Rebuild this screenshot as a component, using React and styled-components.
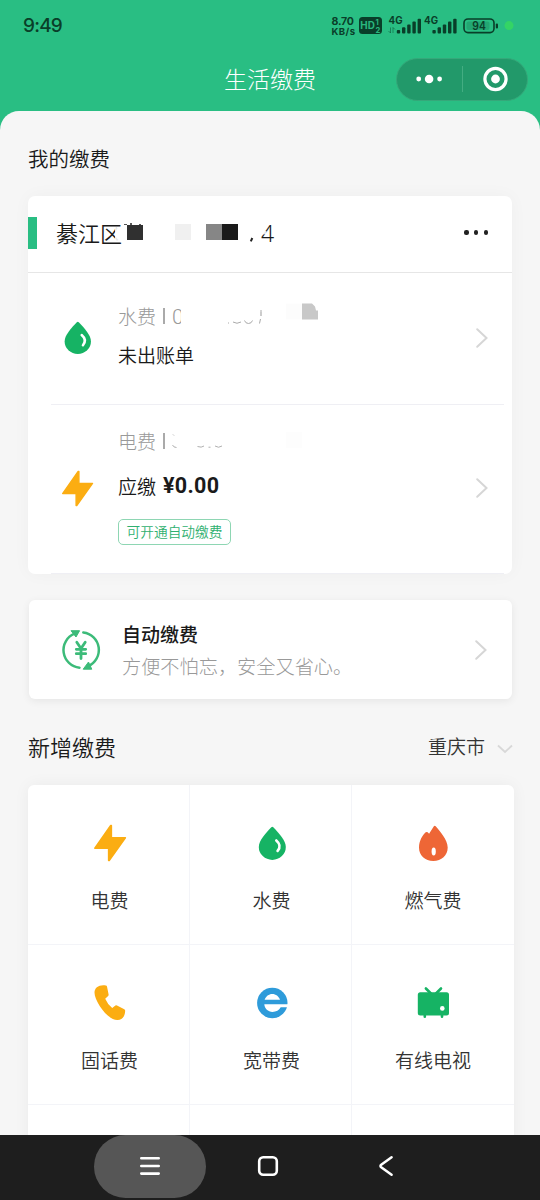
import React from "react";
import styled, { createGlobalStyle } from "styled-components";

const services = [
  { name: "电费", icon: BoltIcon },
  { name: "水费", icon: DropIcon },
  { name: "燃气费", icon: FlameIcon },
  { name: "固话费", icon: PhoneIcon },
  { name: "宽带费", icon: BroadbandIcon },
  { name: "有线电视", icon: TvIcon },
  { name: "" },
  { name: "" },
  { name: "" },
];

export default function App() {
  return (
    <Screen>
      <GlobalStyle />
      <StatusBar>
        <Clock>9:49</Clock>
        <StatusIcons />
      </StatusBar>

      <NavBar>
        <PageTitle>生活缴费</PageTitle>
        <Capsule>
          <CapsuleButton aria-label="更多">
            <svg width="28" height="12" viewBox="0 0 28 12" fill="#fff">
              <circle cx="3.7" cy="6" r="2.4" />
              <circle cx="14.1" cy="6" r="4.3" />
              <circle cx="24.6" cy="6" r="2.4" />
            </svg>
          </CapsuleButton>
          <CapsuleLine />
          <CapsuleButton aria-label="关闭">
            <svg width="26" height="26" viewBox="0 0 26 26">
              <circle cx="13.500" cy="13" r="10.6" fill="none" stroke="#fff" strokeWidth="3.2" />
              <circle cx="13.500" cy="13" r="4.4" fill="#fff" />
            </svg>
          </CapsuleButton>
        </Capsule>
      </NavBar>

      <Sheet>
        <SectionTitle>我的缴费</SectionTitle>

        <BillCard>
          <BillHeader>
            <Accent />
            <Address>綦江区</Address>
            <AddressMask />
            <MoreDots>
              <i />
              <i />
              <i />
            </MoreDots>
          </BillHeader>

          <BillRow $height={131} $top={30}>
            <IconSlot>
              <DropIcon size={39} />
            </IconSlot>
            <BillInfo>
              <Account>
                水费<Bar />
                <WaterMask />
              </Account>
              <BillState $gap={13}>未出账单</BillState>
            </BillInfo>
            <Chevron />
          </BillRow>
          <Divider />
          <BillRow $height={168} $top={23}>
            <IconSlot>
              <BoltIcon size={39} />
            </IconSlot>
            <BillInfo>
              <Account>
                电费<Bar />
                <PowerMask />
              </Account>
              <BillState $gap={18}>
                应缴 <Amount>¥0.00</Amount>
              </BillState>
              <Tag>可开通自动缴费</Tag>
            </BillInfo>
            <Chevron />
          </BillRow>
          <Divider />
        </BillCard>

        <AutoCard>
          <AutoPayIcon />
          <AutoText>
            <AutoTitle>自动缴费</AutoTitle>
            <AutoDesc>方便不怕忘，安全又省心。</AutoDesc>
          </AutoText>
          <Chevron />
        </AutoCard>

        <NewHeader>
          <NewTitle>新增缴费</NewTitle>
          <City>
            重庆市
            <svg width="16" height="10" viewBox="0 0 16 10" fill="none">
              <path d="M1 1.5 8 8l7-6.5" stroke="#d8d8d8" strokeWidth="1.8" />
            </svg>
          </City>
        </NewHeader>

        <Grid>
          {services.map(({ name, icon: Icon }, index) => (
            <Cell key={index}>
              {Icon && <Icon size={40} />}
              <CellName>{name}</CellName>
            </Cell>
          ))}
        </Grid>
      </Sheet>

      <SystemNav>
        <NavPill>
          <svg width="22" height="20" viewBox="0 0 22 20" stroke="#fff" strokeWidth="2.6" strokeLinecap="round">
            <path d="M2.3 2.3h17.4M2.3 10h17.4M2.3 17.6h17.4" />
          </svg>
        </NavPill>
        <NavButton $width={124}>
          <svg width="22" height="22" viewBox="0 0 22 22" fill="none">
            <rect x="2.2" y="2.2" width="17.6" height="17.6" rx="4" stroke="#fff" strokeWidth="2.6" />
          </svg>
        </NavButton>
        <NavButton $width={112}>
          <svg width="16" height="22" viewBox="0 0 16 22" fill="none">
            <path
              d="M13.6 2.2 3.2 9.8q-1.5 1.2 0 2.4l10.4 7.6"
              stroke="#fff"
              strokeWidth="2.5"
              strokeLinecap="round"
              strokeLinejoin="round"
            />
          </svg>
        </NavButton>
      </SystemNav>
    </Screen>
  );
}

function StatusIcons() {
  const ink = "#093e29";
  const bars = [0, 1, 2, 3, 4];
  return (
    <svg width="186" height="24" viewBox="0 0 186 24" fontFamily="Inter, sans-serif" fontWeight="700" fill={ink}>
      <text x="0.5" y="12.2" fontSize="10.6" textLength="22.5">8.70</text>
      <text x="0.5" y="21.6" fontSize="9.6" textLength="23.5">KB/s</text>
      <rect x="28" y="4" width="23" height="17" rx="3.5" />
      <g fill="#2ab77e">
        <text x="29.3" y="16.3" fontSize="9.800" textLength="14.500" lengthAdjust="spacingAndGlyphs">HD</text>
        <text x="44.5" y="12" fontSize="7.6">1</text>
        <text x="44.5" y="19.6" fontSize="7.6">2</text>
      </g>
      {[57.5, 93.1].map((x) => (
        <g key={x}>
          <text x={x} y="11.2" fontSize="10" textLength="14" lengthAdjust="spacingAndGlyphs">4G</text>
          {bars.map((b) => (
            <rect key={b} x={x + 8.3 + b * 5.2} y={17 - b * 2.8} width="3.4" height={3.6 + b * 2.8} rx="1" />
          ))}
        </g>
      ))}
      <path d="M59.5 14.5v5.5l-2-2M62 20v-5.5l2 2" fill="none" stroke={ink} strokeOpacity="0.45" strokeWidth="1" />
      <rect x="133" y="6" width="30" height="13.600" rx="4" fill="none" stroke={ink} strokeWidth="1.6" />
      <rect x="135.5" y="8.5" width="23" height="8.600" rx="2" fillOpacity="0.18" />
      <rect x="164.8" y="10.5" width="2.2" height="5" rx="1" />
      <text x="141.3" y="17" fontSize="11.3" fontWeight="600" textLength="13.500" lengthAdjust="spacingAndGlyphs">94</text>
      <circle cx="178" cy="12.6" r="4.5" fill="#34d465" />
    </svg>
  );
}

// hidden part of the address
function AddressMask() {
  return (
    <Mask width="180" height="30" viewBox="0 0 180 30">
      <path d="M2 8.500h8v14H2z" fill="#fff" fillOpacity="0.9" />
      <path d="M11 5.500h3M26 5.500h2" stroke="#555" strokeWidth="1.2" />
      <path d="M18 4v2" stroke="#222" strokeWidth="1.5" />
      <rect x="14" y="6" width="16" height="15" fill="#303030" />
      <rect x="62" y="5" width="16" height="16" fill="#f0f0f0" />
      <rect x="93" y="5" width="16" height="16" fill="#868686" />
      <rect x="109" y="5" width="16" height="16" fill="#1a1a1a" />
      <path d="m139.3 19-1.5 3.3" stroke="#222" strokeWidth="2" />
      <text x="148" y="22.6" fontFamily="Noto Sans" fontSize="23" fill="#1a1a1a">4</text>
      <path d="M147 5h8l-4.5 7 3 0v3l-7 1z" fill="#fff" fillOpacity="0.85" />
    </Mask>
  );
}

function WaterMask() {
  return (
    <Mask width="150" height="26" viewBox="0 0 150 26">
      <text x="0" y="20.5" fontFamily="Roboto" fontWeight="300" fontSize="21" fill="#9a9a9a">0</text>
      <path d="M9 4h5v18H9z" fill="#fff" />
      <path d="M56 20h1M61 19q4 2.5 8 0M72.500 17.500q1 3 4 3t4-3M89 7v2M88.500 16l-1 4.500" fill="none" stroke="#aaa" />
      <path d="M89 9v4" stroke="#999" />
      <path d="M114 0.500h16v16h-16z" fill="#fcfcfc" />
      <path d="M130 0.500h10l3 3 1 4h2v9h-16z" fill="#c8c8c8" />
    </Mask>
  );
}

function PowerMask() {
  return (
    <Mask width="150" height="26" viewBox="0 0 150 26">
      <path
        d="M1 6.500l1 1M0.500 17q1 2.500 4 2.500M25.500 18.500q4 1.500 6.500-.5M36.500 19.200h2M43 18q3.500 2.500 7 0"
        fill="none"
        stroke="#b0b0b0"
      />
      <rect x="114" y="4" width="16" height="16" fill="#fdfdfd" />
    </Mask>
  );
}

function BoltIcon({ size }) {
  return (
    <svg width={size} height={size} viewBox="0 0 40 40">
      <path
        d="M20.7 2.500h.7v12.300h14L19.200 37.500h-.6V25.200H4.800z"
        fill="#fbad12"
        stroke="#fbad12"
        strokeWidth="1.500"
        strokeLinejoin="round"
      />
    </svg>
  );
}

function DropIcon({ size }) {
  return (
    <svg width={size} height={size} viewBox="0 0 40 40">
      <path
        d="M19.300 4.300q1-1 2 0C27 10.300 33.800 17.500 33.800 24a13.500 12.900 0 0 1-27 0C6.800 17.500 13.600 10.300 19.300 4.300z"
        fill="#16b364"
      />
      <path d="M24.300 17.500q5.800 5 1.300 10.400" fill="none" stroke="#fff" strokeWidth="2.600" strokeLinecap="round" />
    </svg>
  );
}

function FlameIcon({ size }) {
  return (
    <svg width={size} height={size} viewBox="0 0 40 40">
      <path
        d="M20.700 3.400q1.100-1.300 2.200 0C26.500 7.800 34.700 16.500 34.700 24.500 34.700 32.500 28.500 38 20.300 38S6 32.500 6 24.500C6 18 9.300 12.500 12.700 9.300q1-.8 2 0l1.400 1.500z"
        fill="#ee6636"
      />
      <ellipse cx="20.700" cy="28.500" rx="2.100" ry="3.900" fill="#fff" />
    </svg>
  );
}

function PhoneIcon({ size }) {
  return (
    <svg width={size} height={size} viewBox="0 0 40 40">
      <path
        d="M4.500 9.700C4.500 4.500 9 1.400 15.800 2.400q1 .1 1.200 1.200l1.600 7.800q.1.900-.5 1.500l-2.900 2.800q2.500 5.800 7 9.300l3.200-2.400q.8-.5 1.600-.1l7.300 3.700q.9.500.9 1.500C35 34 31.500 37.300 27.200 37 17.500 37 4.500 18 4.500 9.700z"
        fill="#fbad12"
      />
    </svg>
  );
}

function BroadbandIcon({ size }) {
  return (
    <svg width={size} height={size} viewBox="0 0 40 40">
      <circle cx="20.300" cy="20" r="15.200" fill="#2e9bda" />
      <path d="M12.600 16.800c1.200-3.400 4.200-5.700 7.700-5.700s6.500 2.300 7.700 5.700z" fill="#fff" />
      <path d="M12.300 21.300H36v2.900h-7.300c-1.500 2.900-4.600 4.700-8.200 4.700-4.400 0-8-3.300-8.200-7.600z" fill="#fff" />
    </svg>
  );
}

function TvIcon({ size }) {
  return (
    <svg width={size} height={size} viewBox="0 0 40 40">
      <path d="m12.900 5.500 5 5M28 5.500l-5 5M11.800 32v1.700M29 32v1.700" stroke="#16b364" strokeWidth="2.600" strokeLinecap="round" />
      <rect x="4.800" y="9.300" width="31.200" height="23.200" rx="2.500" fill="#16b364" />
      <circle cx="29.300" cy="25.400" r="2.300" fill="#fff" />
    </svg>
  );
}

function AutoPayIcon() {
  return (
    <svg width="40" height="40" viewBox="0 0 40 40">
      <g fill="none" stroke="#3cbb79" strokeWidth="2.500" strokeLinecap="round">
        <path d="M13.500 3.700A17.700 17.700 0 0 0 18.500 37.700" />
        <path d="M22.300 2.400A17.700 17.700 0 0 1 27 36.300" />
      </g>
      <path d="M10 .7h8.600L15 7zM30.800 39.200h-8.600L27.500 32z" fill="#3cbb79" stroke="#3cbb79" strokeLinejoin="round" />
      {/* yen sign: arms, stem, two bars */}
      <path
        d="m15.800 12.200 4.200 6.300 4.200-6.300M20 18.500v10M15.300 19.300h9.400M15.300 23.700h9.400"
        fill="none"
        stroke="#3cbb79"
        strokeWidth="2.800"
        strokeLinecap="round"
      />
    </svg>
  );
}

function Chevron() {
  return (
    <ChevronSvg width="14" height="22" viewBox="0 0 14 22">
      <path d="M2.200 2.200 11.500 11l-9.300 8.800" fill="none" stroke="#d6d6d6" strokeWidth="2" strokeLinecap="round" />
    </ChevronSvg>
  );
}

const GlobalStyle = createGlobalStyle`
  * {
    box-sizing: border-box;
  }
  body {
    margin: 0;
    font-family: "Noto Sans CJK SC", sans-serif;
    font-weight: 350;
    color: #1a1a1a;
  }
  svg {
    display: block;
    flex: none;
  }
`;

const Screen = styled.div`
  width: 540px;
  height: 1200px;
  display: flex;
  flex-direction: column;
  overflow: hidden;
  background: #29be83;
`;

const StatusBar = styled.div`
  height: 47px;
  flex: none;
  display: flex;
  justify-content: space-between;
  padding: 13px 23px 0 23px;
`;

const Clock = styled.div`
  font: 500 19px/26px Inter, sans-serif;
  letter-spacing: -0.8px;
  color: #093e29;
`;

const NavBar = styled.div`
  height: 64px;
  flex: none;
  display: flex;
  align-items: center;
  justify-content: flex-end;
  padding-right: 12px;
`;

const PageTitle = styled.h1`
  margin: 0 80px 2px 0;
  font-size: 23px;
  font-weight: 300;
  line-height: 30px;
  color: #fff;
`;

const Capsule = styled.div`
  width: 132px;
  height: 43px;
  display: flex;
  align-items: center;
  border-radius: 22px;
  background: #22996a;
  border: 1px solid #35a87a;
`;

const CapsuleButton = styled.button`
  flex: 1;
  display: flex;
  justify-content: center;
  padding: 0;
  border: 0;
  background: none;
`;

const CapsuleLine = styled.div`
  width: 1px;
  height: 26px;
  background: #43ad82;
`;

const Sheet = styled.main`
  flex: 1;
  min-height: 0;
  overflow: hidden;
  display: flex;
  flex-direction: column;
  padding: 31px 26px 0 28px;
  border-radius: 19px 19px 0 0;
  background: #f6f6f6;
`;

const SectionTitle = styled.h2`
  margin: 0;
  font-size: 20.5px;
  font-weight: 350;
  line-height: 32px;
`;

const BillCard = styled.section`
  width: 484px;
  height: 378px;
  flex: none;
  margin-top: 22px;
  border-radius: 7px;
  background: #fff;
  box-shadow: 0 0 18px rgba(0, 0, 0, 0.035);
`;

const BillHeader = styled.div`
  height: 77px;
  display: flex;
  align-items: center;
  padding-right: 24px;
  border-bottom: 1px solid #e6e6e6;
`;

const Accent = styled.div`
  width: 9px;
  height: 32px;
  margin: -3px 19px 0 0;
  background: #29be83;
`;

const Address = styled.div`
  white-space: nowrap;
  font-size: 22px;
  line-height: 34px;
  margin: -5px -9px 0 0;
`;

const Mask = styled.svg`
  overflow: visible;
`;

const MoreDots = styled.div`
  display: flex;
  gap: 5.5px;
  margin: -3px 0 0 auto;

  i {
    width: 4.200px;
    height: 4.200px;
    border-radius: 50%;
    background: #222;
  }
`;

const BillRow = styled.div`
  height: ${(p) => p.$height}px;
  display: flex;
  align-items: center;
  padding: 0 23px 2px 30px;

  > div:nth-child(2) {
    align-self: flex-start;
    padding-top: ${(p) => p.$top}px;
  }
`;

const IconSlot = styled.div`
  width: 60px;
`;

const BillInfo = styled.div`
  flex: 1;
`;

const Account = styled.div`
  display: flex;
  align-items: center;
  font-size: 19px;
  font-weight: 300;
  line-height: 26px;
  color: #999;
`;

const Bar = styled.span`
  width: 1.500px;
  height: 16px;
  margin: 0 7px 0 7px;
  background: #aaa;
`;

const BillState = styled.div`
  display: flex;
  align-items: center;
  gap: 7px;
  margin-top: ${(p) => p.$gap}px;
  font-size: 19px;
  line-height: 26px;
`;

const Amount = styled.strong`
  margin-top: 1px;
  font: 700 21.5px/26px Roboto, sans-serif;
  letter-spacing: 0.3px;
`;

const Tag = styled.div`
  width: 113px;
  height: 26px;
  margin-top: 20px;
  border: 1px solid #8ed6b3;
  border-radius: 5px;
  font-size: 13.700px;
  line-height: 23px;
  text-align: center;
  color: #2fb070;
`;

const ChevronSvg = styled.svg`
  margin-left: auto;
`;

const Divider = styled.div`
  height: 1px;
  margin: 0 8px 0 23px;
  background: #efeff4;
`;

const AutoCard = styled.section`
  width: 483px;
  height: 99px;
  flex: none;
  display: flex;
  align-items: center;
  margin: 26px 0 0 1px;
  padding: 0 24px 0 32px;
  border-radius: 6px;
  background: #fff;
  box-shadow: 0 2px 8px rgba(0, 0, 0, 0.07);
`;

const AutoText = styled.div`
  margin-left: 21px;
`;

const AutoTitle = styled.div`
  font-size: 19px;
  font-weight: 500;
  line-height: 28px;
`;

const AutoDesc = styled.div`
  margin-top: 4px;
  font-size: 19.200px;
  font-weight: 300;
  line-height: 28px;
  color: #999;
`;

const NewHeader = styled.div`
  height: 86px;
  flex: none;
  display: flex;
  align-items: center;
  justify-content: space-between;
  padding: 7px 1px 0 0;
`;

const NewTitle = styled.h2`
  margin: 0;
  font-size: 22px;
  font-weight: 350;
  line-height: 32px;
`;

const City = styled.div`
  display: flex;
  align-items: center;
  gap: 12px;
  font-size: 19px;
  line-height: 28px;
  color: #333;

  svg {
    margin-top: 6px;
  }
`;

const Grid = styled.section`
  width: 486px;
  flex: none;
  display: grid;
  grid-template-columns: 162px 162px 162px;
  border-radius: 6px;
  overflow: hidden;
  background: #fff;
  box-shadow: 0 0 16px rgba(0, 0, 0, 0.05);
`;

const Cell = styled.div`
  height: 160px;
  display: flex;
  flex-direction: column;
  align-items: center;
  padding-top: 38px;
  border-bottom: 1.500px solid #f3f4f8;

  &:not(:nth-child(3n)) {
    padding-left: 2px;
    border-right: 1px solid #f3f4f8;
  }
`;

const CellName = styled.div`
  margin-top: 23px;
  font-size: 19px;
  line-height: 28px;
  color: #333;
`;

const SystemNav = styled.nav`
  height: 65px;
  flex: none;
  display: flex;
  align-items: flex-start;
  padding-left: 94px;
  background: #1e1e1e;
`;

const NavPill = styled.div`
  width: 112px;
  height: 63px;
  display: flex;
  align-items: center;
  justify-content: center;
  padding-bottom: 1px;
  border-radius: 32px;
  background: #565656;
`;

const NavButton = styled.div`
  width: ${(p) => p.$width}px;
  height: 62px;
  display: flex;
  align-items: center;
  justify-content: center;
`;
